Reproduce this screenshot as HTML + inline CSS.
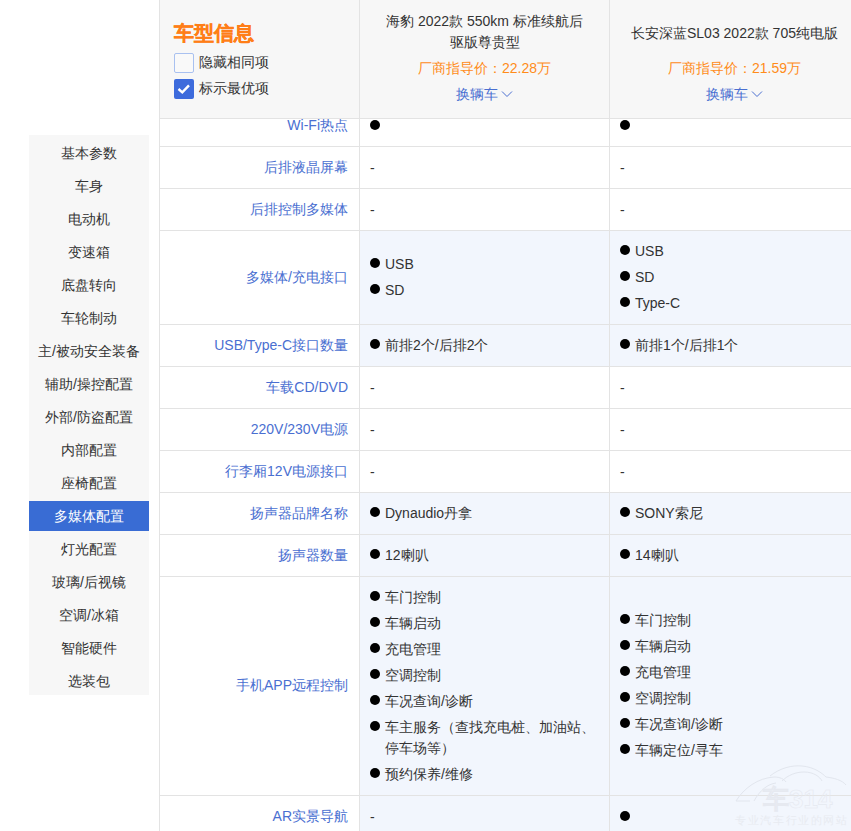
<!DOCTYPE html>
<html><head><meta charset="utf-8">
<style>
*{margin:0;padding:0;box-sizing:border-box}
html,body{width:851px;height:831px;overflow:hidden;background:#fff;font-family:"Liberation Sans",sans-serif;font-size:14px;color:#333}
#nav{position:absolute;left:29px;top:135px;width:120px;height:560px;background:#f7f7f7}
#nav div{position:absolute;left:0;width:120px;height:30px;line-height:30px;text-align:center;font-size:14px;color:#333}
#nav div.on{background:#396cd4;color:#fff}
.row{position:absolute;left:159px;width:700px;border-top:1px solid #e3e3e3}
.row>div{position:absolute;top:0;bottom:0;display:flex;flex-direction:column;justify-content:center}
.lab{left:1px;width:199px;align-items:flex-end;padding-right:11px;color:#4a6fd1}
.c1{left:201px;width:249px;padding-left:10px}
.c2{left:451px;width:249px;padding-left:10px}
.b .c1,.b .c2{background:#f2f6fd}
.vl{position:absolute;top:0;width:1px;height:831px;background:#e3e3e3}
.it{position:relative;padding-left:15px;line-height:21px;margin:2.5px 0}
.it:before{content:"";position:absolute;left:0;top:4px;width:10px;height:10px;border-radius:50%;background:#000}
.d{line-height:21px;position:relative;top:1px}
#hdr{position:absolute;left:159px;top:0;width:700px;height:119px;background:#f7f7f7;border-bottom:1px solid #e3e3e3}
</style></head><body>
<div id="nav">
<div style="top:3px">基本参数</div>
<div style="top:36px">车身</div>
<div style="top:69px">电动机</div>
<div style="top:102px">变速箱</div>
<div style="top:135px">底盘转向</div>
<div style="top:168px">车轮制动</div>
<div style="top:201px">主/被动安全装备</div>
<div style="top:234px">辅助/操控配置</div>
<div style="top:267px">外部/防盗配置</div>
<div style="top:300px">内部配置</div>
<div style="top:333px">座椅配置</div>
<div class="on" style="top:366px">多媒体配置</div>
<div style="top:399px">灯光配置</div>
<div style="top:432px">玻璃/后视镜</div>
<div style="top:465px">空调/冰箱</div>
<div style="top:498px">智能硬件</div>
<div style="top:531px">选装包</div>
</div>

<div class="row" style="top:104px;height:42px"><div class="lab">Wi-Fi热点</div><div class="c1" style="padding-top:2px"><div class="it">&nbsp;</div></div><div class="c2" style="padding-top:2px"><div class="it">&nbsp;</div></div></div>
<div class="row" style="top:146px;height:42px"><div class="lab">后排液晶屏幕</div><div class="c1"><div class="d">-</div></div><div class="c2"><div class="d">-</div></div></div>
<div class="row" style="top:188px;height:42px"><div class="lab">后排控制多媒体</div><div class="c1"><div class="d">-</div></div><div class="c2"><div class="d">-</div></div></div>
<div class="row b" style="top:230px;height:94px"><div class="lab">多媒体/充电接口</div><div class="c1"><div class="it">USB</div><div class="it">SD</div></div><div class="c2"><div class="it">USB</div><div class="it">SD</div><div class="it">Type-C</div></div></div>
<div class="row b" style="top:324px;height:42px"><div class="lab">USB/Type-C接口数量</div><div class="c1"><div class="it">前排2个/后排2个</div></div><div class="c2"><div class="it">前排1个/后排1个</div></div></div>
<div class="row" style="top:366px;height:42px"><div class="lab">车载CD/DVD</div><div class="c1"><div class="d">-</div></div><div class="c2"><div class="d">-</div></div></div>
<div class="row" style="top:408px;height:42px"><div class="lab">220V/230V电源</div><div class="c1"><div class="d">-</div></div><div class="c2"><div class="d">-</div></div></div>
<div class="row" style="top:450px;height:42px"><div class="lab">行李厢12V电源接口</div><div class="c1"><div class="d">-</div></div><div class="c2"><div class="d">-</div></div></div>
<div class="row b" style="top:492px;height:42px"><div class="lab">扬声器品牌名称</div><div class="c1"><div class="it">Dynaudio丹拿</div></div><div class="c2"><div class="it">SONY索尼</div></div></div>
<div class="row b" style="top:534px;height:42px"><div class="lab">扬声器数量</div><div class="c1"><div class="it">12喇叭</div></div><div class="c2"><div class="it">14喇叭</div></div></div>
<div class="row b" style="top:576px;height:219px"><div class="lab">手机APP远程控制</div><div class="c1"><div class="it">车门控制</div><div class="it">车辆启动</div><div class="it">充电管理</div><div class="it">空调控制</div><div class="it">车况查询/诊断</div><div class="it">车主服务（查找充电桩、加油站、<br>停车场等）</div><div class="it">预约保养/维修</div></div><div class="c2" style="padding-bottom:2px"><div class="it">车门控制</div><div class="it">车辆启动</div><div class="it">充电管理</div><div class="it">空调控制</div><div class="it">车况查询/诊断</div><div class="it">车辆定位/寻车</div></div></div>
<div class="row b" style="top:795px;height:42px"><div class="lab">AR实景导航</div><div class="c1"><div class="d">-</div></div><div class="c2" style="padding-top:2px"><div class="it">&nbsp;</div></div></div>

<div id="hdr">
<div style="position:absolute;left:15px;top:21px;font-size:20px;line-height:24px;font-weight:bold;color:#ff7e17;-webkit-text-stroke:0.35px #ff7e17">车型信息</div>
<div style="position:absolute;left:15px;top:53px;width:20px;height:20px;border:1px solid #a9c1f0;border-radius:2px;background:#f9f9f9"></div>
<div style="position:absolute;left:40px;top:52px;line-height:21px;color:#333">隐藏相同项</div>
<div style="position:absolute;left:15px;top:79px;width:20px;height:20px;border-radius:2px;background:#3d6bdc"><svg width="20" height="20" style="position:absolute;left:0;top:0"><path d="M4.5 10 L8.3 13.3 L15 6.3" fill="none" stroke="#fff" stroke-width="2.4"/></svg></div>
<div style="position:absolute;left:40px;top:78px;line-height:21px;color:#333">标示最优项</div>
<div style="position:absolute;left:201px;top:11px;width:249px;text-align:center;line-height:21px;color:#333">海豹 2022款 550km 标准续航后<br>驱版尊贵型</div>
<div style="position:absolute;left:201px;top:58px;width:249px;text-align:center;line-height:21px;color:#ff8c1a">厂商指导价：22.28万</div>
<div style="position:absolute;left:201px;top:84px;width:249px;text-align:center;line-height:21px;color:#4a6fd1">换辆车<svg width="12" height="8" style="margin-left:3px;vertical-align:1px"><path d="M1 1.5 L6 6.5 L11 1.5" fill="none" stroke="#4a6fd1" stroke-width="1"/></svg></div>
<div style="position:absolute;left:451px;top:23px;width:249px;text-align:center;line-height:21px;color:#333">长安深蓝SL03 2022款 705纯电版</div>
<div style="position:absolute;left:451px;top:58px;width:249px;text-align:center;line-height:21px;color:#ff8c1a">厂商指导价：21.59万</div>
<div style="position:absolute;left:451px;top:84px;width:249px;text-align:center;line-height:21px;color:#4a6fd1">换辆车<svg width="12" height="8" style="margin-left:3px;vertical-align:1px"><path d="M1 1.5 L6 6.5 L11 1.5" fill="none" stroke="#4a6fd1" stroke-width="1"/></svg></div>
</div>
<svg style="position:absolute;left:730px;top:760px" width="121" height="71" viewBox="0 0 121 71">
<g fill="none" stroke="#e2e6ee" stroke-width="1">
<path d="M6 41 C14 28 28 18 44 17 C50 17 54 19 56 22"/>
<path d="M24 41 C30 30 38 24 46 23"/>
<path d="M40 16 C50 8 62 5 72 6 C84 7 92 13 96 17 C104 18 112 20 116 25"/>
<path d="M52 21 C58 15 66 12 74 12 C84 12 90 17 92 21"/>
<path d="M6 41 L20 41"/>
</g>
<text x="33" y="48" font-size="26" font-weight="bold" fill="none" stroke="#e6e9f0" stroke-width="0.6" font-family="Liberation Sans">车314</text>
<text x="5" y="64" font-size="11" fill="#e8ebf1" font-family="Liberation Sans" textLength="112">专业汽车行业的网站</text>
</svg>
<div class="vl" style="left:159px"></div>
<div class="vl" style="left:359px"></div>
<div class="vl" style="left:609px"></div>
</body></html>
